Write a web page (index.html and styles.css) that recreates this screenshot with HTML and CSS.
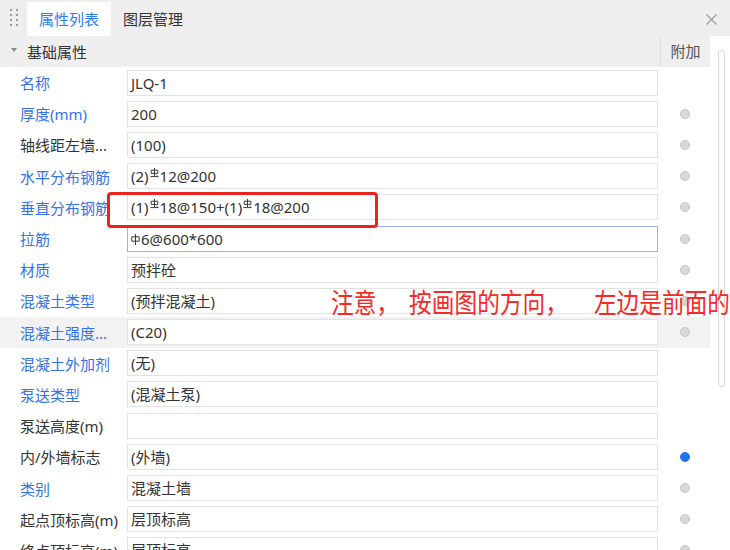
FILE: index.html
```html
<!DOCTYPE html>
<html lang="zh">
<head>
<meta charset="utf-8">
<title>属性列表</title>
<link rel="stylesheet" href="styles.css">
</head>
<body>
<div class="panel">
  <div class="tabbar">
    <div class="grip"><i></i><i></i><i></i><i></i><i></i><i></i><i></i><i></i></div>
    <div class="tab active">属性列表</div>
    <div class="tab">图层管理</div>
    <div class="spacer"></div>
    <svg class="close" width="11" height="11" viewBox="0 0 11 11"><path d="M0.5 0.5L10.5 10.5M10.5 0.5L0.5 10.5" stroke="#9a9a9a" stroke-width="1.1" fill="none"/></svg>
  </div>
  <div class="main">
    <div class="grid">
      <div class="group-head">
        <span class="caret"></span><span class="gtitle">基础属性</span>
        <span class="extra-head">附加</span>
      </div>
      <div class="row"><div class="label link">名称</div><div class="value">JLQ-1</div><div class="extra"></div></div>
      <div class="row"><div class="label link">厚度(mm)</div><div class="value">200</div><div class="extra"><span class="radio"></span></div></div>
      <div class="row"><div class="label">轴线距左墙...</div><div class="value">(100)</div><div class="extra"><span class="radio"></span></div></div>
      <div class="row"><div class="label link">水平分布钢筋</div><div class="value">(2)<svg class="rb" width="9" height="10" viewBox="0 0 9 10"><path d="M4.5 0V8.2M1.2 2.2H7.8V5.4H1.2ZM0.4 8.6H8.6M6.6 7.3L7.8 8.3" stroke="#3a3a3a" stroke-width="1" fill="none"/></svg>12@200</div><div class="extra"><span class="radio"></span></div></div>
      <div class="row"><div class="label link">垂直分布钢筋</div><div class="value">(1)<svg class="rb" width="9" height="10" viewBox="0 0 9 10"><path d="M4.5 0V8.2M1.2 2.2H7.8V5.4H1.2ZM0.4 8.6H8.6M6.6 7.3L7.8 8.3" stroke="#3a3a3a" stroke-width="1" fill="none"/></svg>18@150+(1)<svg class="rb" width="9" height="10" viewBox="0 0 9 10"><path d="M4.5 0V8.2M1.2 2.2H7.8V5.4H1.2ZM0.4 8.6H8.6M6.6 7.3L7.8 8.3" stroke="#3a3a3a" stroke-width="1" fill="none"/></svg>18@200</div><div class="extra"><span class="radio"></span></div></div>
      <div class="row"><div class="label link">拉筋</div><div class="value focus"><svg class="rb phi" width="9" height="11" viewBox="0 0 9 11"><path d="M4.5 0V11M0.8 2.8H8.2V7.2H0.8Z" stroke="#3a3a3a" stroke-width="1" fill="none"/></svg>6@600*600</div><div class="extra"><span class="radio"></span></div></div>
      <div class="row"><div class="label link">材质</div><div class="value">预拌砼</div><div class="extra"><span class="radio"></span></div></div>
      <div class="row"><div class="label link">混凝土类型</div><div class="value">(预拌混凝土)</div><div class="extra"><span class="radio"></span></div></div>
      <div class="row hover"><div class="label link">混凝土强度...</div><div class="value">(C20)</div><div class="extra"><span class="radio"></span></div></div>
      <div class="row"><div class="label link">混凝土外加剂</div><div class="value">(无)</div><div class="extra"></div></div>
      <div class="row"><div class="label link">泵送类型</div><div class="value">(混凝土泵)</div><div class="extra"></div></div>
      <div class="row"><div class="label">泵送高度(m)</div><div class="value"></div><div class="extra"></div></div>
      <div class="row"><div class="label">内/外墙标志</div><div class="value">(外墙)</div><div class="extra"><span class="radio on"></span></div></div>
      <div class="row"><div class="label link">类别</div><div class="value">混凝土墙</div><div class="extra"><span class="radio"></span></div></div>
      <div class="row"><div class="label">起点顶标高(m)</div><div class="value">层顶标高</div><div class="extra"><span class="radio"></span></div></div>
      <div class="row"><div class="label">终点顶标高(m)</div><div class="value">层顶标高</div><div class="extra"><span class="radio"></span></div></div>
    </div>
    <div class="scroll"><div class="thumb"></div></div>
  </div>
  <div class="note-box"></div>
  <div class="note">注意<span class="comma c1">，</span>按画图的方向<span class="comma c2">，</span>左边是前面的</div>
</div>
</body>
</html>
```

FILE: styles.css
```css
html, body {
  margin: 0;
  padding: 0;
  width: 730px;
  height: 550px;
  overflow: hidden;
  background: #ffffff;
}
.panel {
  position: relative;
  width: 730px;
  height: 550px;
  overflow: hidden;
  font-family: "Noto Sans", "Noto Sans CJK SC", sans-serif;
  font-size: 15px;
  color: #333333;
}
.tabbar {
  height: 36px;
  background: #eeeeee;
  display: flex;
  align-items: flex-end;
  box-sizing: border-box;
}
.grip {
  width: 27px;
  height: 36px;
  display: grid;
  grid-template-columns: 2px 2px;
  grid-template-rows: repeat(4, 2px);
  column-gap: 4px;
  row-gap: 3px;
  align-content: center;
  justify-content: center;
  padding-bottom: 2px;
  box-sizing: border-box;
}
.grip i {
  display: block;
  width: 2px;
  height: 2px;
  background: #9b9b9b;
}
.tab {
  height: 34px;
  line-height: 34px;
  padding: 0 12px;
  color: #333333;
  white-space: nowrap;
}
.tab.active {
  background: #ffffff;
  color: #2c7ef0;
}
.spacer { flex: 1; }
.close {
  align-self: center;
  margin-right: 13px;
  margin-top: 2px;
}
.main {
  display: flex;
}
.grid {
  width: 710px;
}
.group-head {
  height: 31px;
  background: #efefef;
  display: flex;
  align-items: center;
}
.caret {
  width: 0;
  height: 0;
  border-left: 3px solid transparent;
  border-right: 3px solid transparent;
  border-top: 4px solid #8a8a8a;
  margin-left: 11px;
  margin-right: 10px;
  margin-top: -4px;
}
.gtitle {
  flex: 1;
  color: #333333;
}
.extra-head {
  width: 50px;
  height: 31px;
  line-height: 31px;
  text-align: center;
  border-left: 1px solid #dcdcdc;
  box-sizing: border-box;
  color: #555555;
}
.row {
  height: 31.2px;
  display: grid;
  grid-template-columns: 127px 1fr 50px;
  align-items: center;
}
.row.hover {
  background: #f2f2f2;
}
.label {
  padding-left: 20px;
  white-space: nowrap;
  overflow: hidden;
  color: #333333;
}
.label.link {
  color: #3572e8;
}
.value {
  height: 26px;
  line-height: 24px;
  margin-right: 2px;
  border: 1px solid #e2e2e2;
  box-sizing: border-box;
  padding: 0 3px;
  background: #ffffff;
  color: #333333;
  white-space: nowrap;
}
.value.focus {
  border-color: #97b3ea;
}
.rb {
  vertical-align: 4px;
  margin: 0 1px;
}
.rb.phi {
  vertical-align: 0;
  margin-left: 0;
}
.extra {
  display: flex;
  justify-content: center;
  align-items: center;
}
.radio {
  width: 10px;
  height: 10px;
  border-radius: 50%;
  background: #d8d8d8;
  border: 1px solid #c4c4c4;
  box-sizing: border-box;
}
.radio.on {
  background: #1f74ea;
  border-color: #1f74ea;
}
.scroll {
  width: 20px;
  padding-top: 14px;
  padding-left: 8px;
  box-sizing: border-box;
}
.thumb {
  width: 7px;
  height: 337px;
  border: 1px solid #d9d9d9;
  border-radius: 3px;
  box-sizing: border-box;
  background: #ffffff;
}
.note-box {
  position: absolute;
  left: 107px;
  top: 192px;
  width: 271px;
  height: 36px;
  border: 3px solid #ea2320;
  border-radius: 4px;
  box-sizing: border-box;
}
.note {
  position: absolute;
  left: 331px;
  top: 287px;
  font-family: "Noto Sans CJK SC", sans-serif;
  font-size: 27px;
  line-height: 30px;
  color: #f42a2a;
  white-space: nowrap;
  transform: scaleX(0.84);
  transform-origin: left top;
}
.comma.c1 {
  margin-right: 12px;
}
.comma.c2 {
  margin-right: 31px;
}
```
